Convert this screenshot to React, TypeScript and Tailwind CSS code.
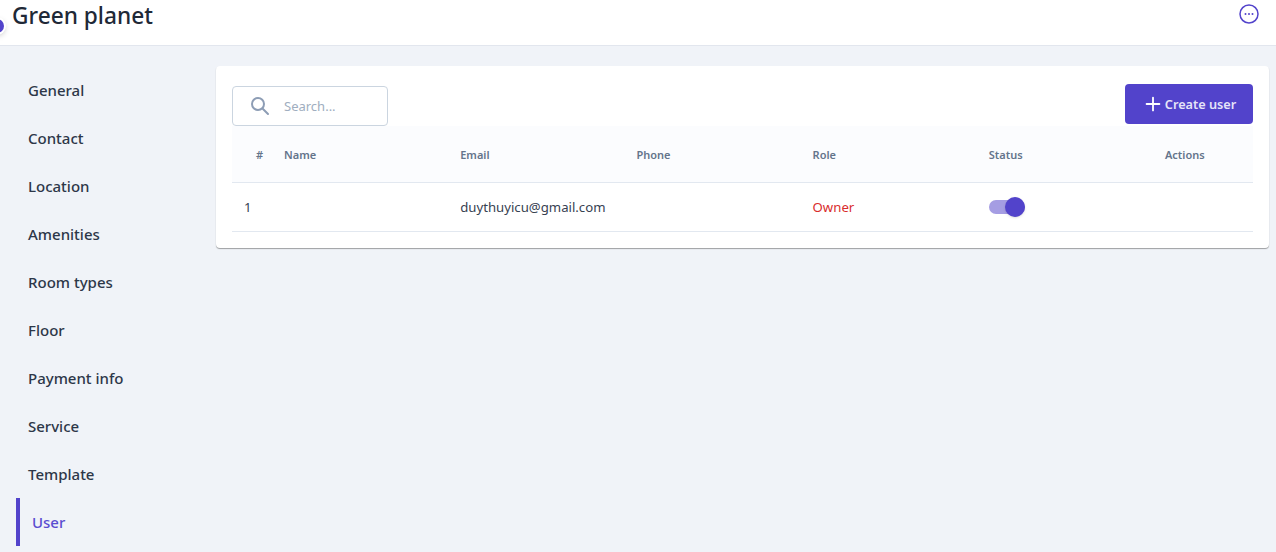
import { Plus } from 'lucide-react';

const navItems = ['General', 'Contact', 'Location', 'Amenities', 'Room types', 'Floor', 'Payment info', 'Service', 'Template'];

const columns = ['Name', 'Email', 'Phone', 'Role', 'Status', 'Actions'];

export default function App() {
  return (
    <div className="relative flex h-[552px] w-[1276px] flex-col overflow-hidden bg-[#f0f3f8] font-['Noto_Sans',sans-serif]">
      {/* collapsed sidebar toggle, hanging off the left edge */}
      <div className="absolute left-[-10px] top-[19px] z-10 h-[14px] w-[14px] rounded-full bg-[#5243cb] shadow-[0_0_0_2px_#fff,0_2px_6px_rgba(0,0,0,0.3)]" />

      <header className="flex h-[46px] shrink-0 items-start justify-between border-b border-[#e2e6ee] bg-white pl-3 pr-[17px]">
        <h1 className="text-[22.7px] font-medium leading-[31px] text-[#1f2937]">Green planet</h1>
        <svg className="mt-[4px]" width="20" height="20" viewBox="0 0 20 20" fill="none">
          <circle cx="10" cy="10" r="9" stroke="#5243cb" strokeWidth="1.5" />
          <circle cx="6.5" cy="10" r="1" fill="#5243cb" />
          <circle cx="10" cy="10" r="1" fill="#5243cb" />
          <circle cx="13.5" cy="10" r="1" fill="#5243cb" />
        </svg>
      </header>

      <div className="flex min-h-0 flex-1">
        <nav className="w-[216px] shrink-0 pl-4 pt-5">
          {navItems.map((item) => (
            <div key={item} className="flex h-12 items-center pl-3 text-[15px] font-medium text-[#2d3748]">
              {item}
            </div>
          ))}
          <div className="flex h-12 items-center border-l-4 border-[#5243cb] pl-3 text-[15px] font-medium text-[#5a4dd0]">
            User
          </div>
        </nav>

        <main className="pt-5">
          <section className="w-[1053px] rounded-[4px] bg-white px-4 pb-4 shadow-[0_1px_1px_rgba(0,0,0,0.35)]">
            <div className="flex h-[60px] items-start justify-between">
              <div className="mt-5 flex h-10 w-[156px] items-center gap-[14px] rounded-[4px] border border-[#cbd5e0] pl-[17px]">
                <svg width="20" height="20" viewBox="0 0 20 20" fill="none" stroke="#8d9db5" strokeWidth="2">
                  <circle cx="8" cy="8" r="6" />
                  <path d="M12.5 12.5L18 18" strokeLinecap="round" />
                </svg>
                <span className="pt-px text-[13px] text-[#a0aec0]">Search...</span>
              </div>
              <button className="mt-[18px] flex h-10 w-[128px] items-center justify-center rounded-[4px] bg-[#5243cb] text-[12.7px] font-semibold text-[#e6e4f8]">
                <Plus size={22} strokeWidth={2} className="text-white" />
                <span className="pl-[1px] pt-px">Create user</span>
              </button>
            </div>

            <table className="w-full table-fixed border-collapse">
              <thead>
                <tr className="h-[56px] border-b border-[#e2e8f0] bg-[#fbfcfe] text-[11px] font-semibold text-[#64748b]">
                  <th className="w-[40px] pl-6 pt-[2px] text-left font-semibold">#</th>
                  {columns.map((col) => (
                    <th key={col} className={col === 'Actions' ? 'pl-3 pt-[2px] text-left font-semibold' : 'w-[176.2px] pl-3 pt-[2px] text-left font-semibold'}>
                      {col}
                    </th>
                  ))}
                </tr>
              </thead>
              <tbody>
                <tr className="h-[49px] border-b border-[#e2e8f0] text-[13.2px] text-[#374151]">
                  <td className="pl-3 pt-[2px]">1</td>
                  <td />
                  <td className="pl-3 pt-[2px]">duythuyicu@gmail.com</td>
                  <td />
                  <td className="pl-3 pt-[2px] text-[#d92d2d]">Owner</td>
                  <td className="pl-3">
                    <div className="relative h-[14px] w-[36px] rounded-full bg-[#a59de3]">
                      <div className="absolute right-0 top-[-3px] h-5 w-5 rounded-full bg-[#5243cb] shadow-sm" />
                    </div>
                  </td>
                  <td />
                </tr>
              </tbody>
            </table>
          </section>
        </main>
      </div>
    </div>
  );
}
